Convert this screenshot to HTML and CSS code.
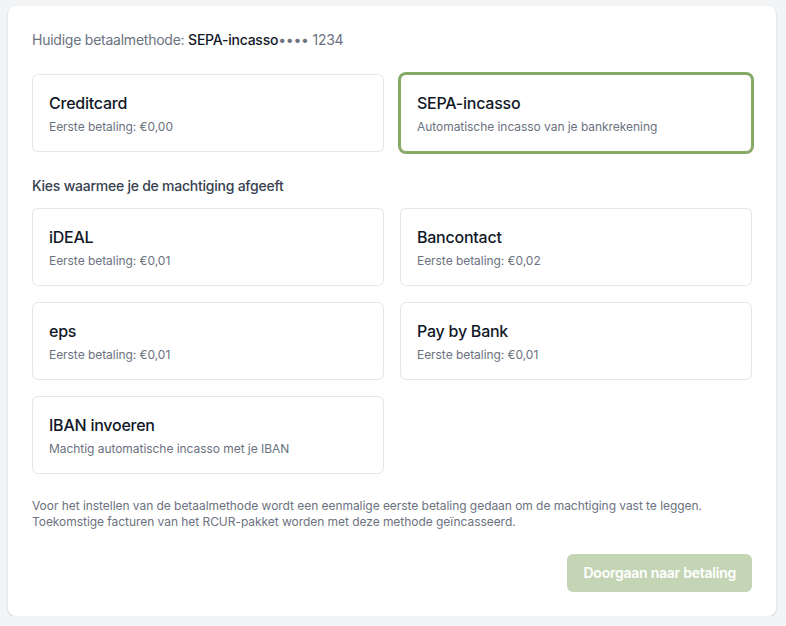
FILE: index.html
```html
<!DOCTYPE html>
<html lang="nl">
<head>
<meta charset="utf-8">
<title>Betaalmethode wijzigen</title>
<link rel="stylesheet" href="styles.css">
</head>
<body>
<main class="panel">
  <p class="current">Huidige betaalmethode: <strong>SEPA-incasso</strong>•••• 1234</p>

  <div class="grid">
    <button class="option" type="button">
      <span class="option-title">Creditcard</span>
      <span class="option-sub">Eerste betaling: €0,00</span>
    </button>
    <button class="option is-selected" type="button">
      <span class="option-title">SEPA-incasso</span>
      <span class="option-sub">Automatische incasso van je bankrekening</span>
    </button>
  </div>

  <h2 class="section-title">Kies waarmee je de machtiging afgeeft</h2>

  <div class="grid">
    <button class="option" type="button">
      <span class="option-title">iDEAL</span>
      <span class="option-sub">Eerste betaling: €0,01</span>
    </button>
    <button class="option" type="button">
      <span class="option-title">Bancontact</span>
      <span class="option-sub">Eerste betaling: €0,02</span>
    </button>
    <button class="option" type="button">
      <span class="option-title">eps</span>
      <span class="option-sub">Eerste betaling: €0,01</span>
    </button>
    <button class="option" type="button">
      <span class="option-title">Pay by Bank</span>
      <span class="option-sub">Eerste betaling: €0,01</span>
    </button>
    <button class="option" type="button">
      <span class="option-title">IBAN invoeren</span>
      <span class="option-sub">Machtig automatische incasso met je IBAN</span>
    </button>
  </div>

  <p class="note">Voor het instellen van de betaalmethode wordt een eenmalige eerste betaling gedaan om de machtiging vast te leggen. Toekomstige facturen van het RCUR-pakket worden met deze methode geïncasseerd.</p>

  <div class="actions">
    <button class="primary" type="button" disabled>Doorgaan naar betaling</button>
  </div>
</main>
</body>
</html>
```
FILE: styles.css
```css
* {
  box-sizing: border-box;
}

html,
body {
  margin: 0;
  background: #f3f4f6;
  font-family: Inter, "Noto Sans", "Liberation Sans", sans-serif;
  letter-spacing: -0.015em;
  color: #111827;
}

.panel {
  margin: 6px 10px 0 8px;
  background: #ffffff;
  border-radius: 8px;
  box-shadow: 0 1px 3px rgba(0, 0, 0, 0.1), 0 1px 2px rgba(0, 0, 0, 0.06);
  padding: 24px;
}

.current {
  margin: 0 0 24px;
  font-size: 14px;
  line-height: 20px;
  color: #6b7280;
}

.current strong {
  font-weight: 500;
  color: #111827;
}

.grid {
  display: grid;
  grid-template-columns: 1fr 1fr;
  gap: 16px;
}

.option {
  display: flex;
  flex-direction: column;
  align-items: flex-start;
  text-align: left;
  font: inherit;
  letter-spacing: inherit;
  background: #ffffff;
  border: 1px solid #e5e7eb;
  border-radius: 6px;
  padding: 16px;
  height: 78px;
  cursor: pointer;
}

/* selected option: green border plus a 2px ring outside it */
.option.is-selected {
  border-color: #86a966;
  box-shadow: 0 0 0 2px #86a966;
}

.option-title {
  font-size: 16px;
  line-height: 24px;
  font-weight: 500;
  color: #111827;
}

.option-sub {
  margin-top: 4px;
  font-size: 12px;
  line-height: 16px;
  letter-spacing: -0.004em;
  color: #6b7280;
}

.section-title {
  margin: 24px 0 12px;
  font-size: 14px;
  line-height: 20px;
  font-weight: 500;
  color: #374151;
}

.note {
  margin: 24px 0 24px;
  font-size: 12px;
  line-height: 16px;
  letter-spacing: -0.004em;
  color: #6b7280;
}

.actions {
  display: flex;
  justify-content: flex-end;
}

.primary {
  font: inherit;
  letter-spacing: inherit;
  font-size: 14px;
  font-weight: 600;
  line-height: 20px;
  color: #ffffff;
  background: #86a966;
  opacity: 0.48;
  border: 0;
  border-radius: 6px;
  height: 38px;
  padding: 0 16px;
}
```
